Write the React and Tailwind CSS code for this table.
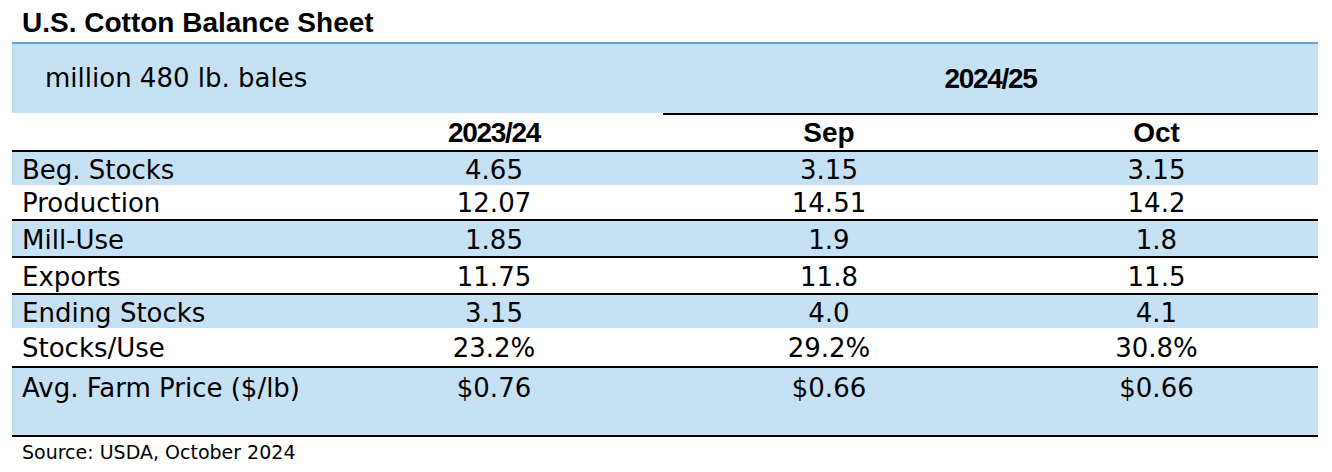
import React from "react";

const rows = [
  { label: "Beg. Stocks", v: ["4.65", "3.15", "3.15"], blue: true, h: "h-[33px]", border: false },
  { label: "Production", v: ["12.07", "14.51", "14.2"], blue: false, h: "h-[36px]", border: true },
  { label: "Mill-Use", v: ["1.85", "1.9", "1.8"], blue: true, h: "h-[37px]", border: true },
  { label: "Exports", v: ["11.75", "11.8", "11.5"], blue: false, h: "h-[37px]", border: true },
  { label: "Ending Stocks", v: ["3.15", "4.0", "4.1"], blue: true, h: "h-[33px]", border: false },
  { label: "Stocks/Use", v: ["23.2%", "29.2%", "30.8%"], blue: false, h: "h-[40px]", border: true },
];

const grid = "grid grid-cols-[313px_338px_332px_323px]";
const reg = { fontFamily: '"DejaVu Sans", "Liberation Sans", sans-serif' };
const bold = { fontFamily: '"Liberation Sans", Arial, sans-serif' };

export default function App() {
  return (
    <div className="w-[1332px] h-[472px] bg-white pl-[12px] pr-[14px] text-black" style={reg}>
      <div className="h-[42px] flex items-center pl-[10px] pt-[4px] text-[28px] font-bold leading-none" style={bold}>
        U.S. Cotton Balance Sheet
      </div>
      <div className={`${grid} border-t-2 border-[#5fa8dc]`}>
        <div className="col-span-2 h-[69px] bg-[#c7e1f4] flex items-center pl-[33px] text-[26px] leading-none pb-[2px]">
          million 480 lb. bales
        </div>
        <div
          className="col-span-2 h-[71px] bg-[#c7e1f4] border-b-2 border-black flex items-center justify-center text-[28px] font-bold leading-none tracking-[-1.3px]"
          style={bold}
        >
          2024/25
        </div>
      </div>
      <div className={`${grid} h-[37px] border-b-2 border-black text-[28px] font-bold leading-none`} style={bold}>
        <div />
        <div className="flex items-center justify-center tracking-[-1.3px]">2023/24</div>
        <div className="flex items-center justify-center">Sep</div>
        <div className="flex items-center justify-center">Oct</div>
      </div>
      {rows.map((r) => (
        <div
          key={r.label}
          className={`${grid} ${r.h} ${r.blue ? "bg-[#c7e1f4]" : "bg-white"} ${r.border ? "border-b-2 border-black" : ""} text-[26px] leading-none`}
        >
          <div className="flex items-center pl-[10px] pt-[2px]">{r.label}</div>
          {r.v.map((x, i) => (
            <div key={i} className="flex items-center justify-center pt-[2px]">
              {x}
            </div>
          ))}
        </div>
      ))}
      <div className={`${grid} h-[69px] bg-[#c7e1f4] border-b-2 border-black text-[26px] leading-none`}>
        <div className="h-[37px] flex items-center pl-[10px] pt-[2px]">Avg. Farm Price ($/lb)</div>
        <div className="h-[37px] flex items-center justify-center pt-[2px]">$0.76</div>
        <div className="h-[37px] flex items-center justify-center pt-[2px]">$0.66</div>
        <div className="h-[37px] flex items-center justify-center pt-[2px]">$0.66</div>
      </div>
      <div className="h-[30px] flex items-center pl-[10px] text-[19px] leading-none">Source: USDA, October 2024</div>
    </div>
  );
}
